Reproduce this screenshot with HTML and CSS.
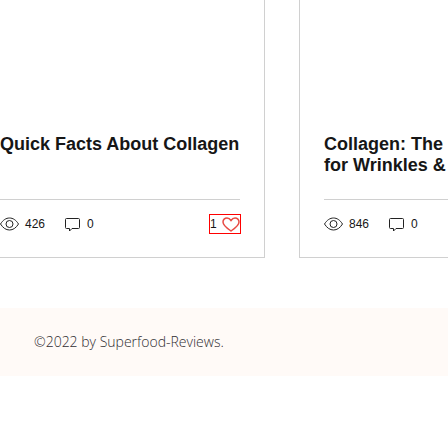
FILE: index.html
```html
<!DOCTYPE html>
<html lang="en">
<head>
<meta charset="utf-8">
<title>Superfood-Reviews</title>
<link rel="stylesheet" href="styles.css">
</head>
<body>
<svg class="defs" aria-hidden="true">
  <symbol id="eye" viewBox="0 0 19 14">
    <path d="M.5 7C3 3 6 1 9.500 1S16 3 18.500 7C16 11 13 13 9.500 13S3 11 .5 7Z"/>
    <circle cx="9.500" cy="7" r="3.500"/>
  </symbol>
  <symbol id="comment" viewBox="0 0 16 15">
    <path d="M1.500 1.500h12q1 0 1 1v8q0 1-1 1H7L4.500 14v-2.500h-3q-1 0-1-1v-8q0-1 1-1Z"/>
  </symbol>
  <symbol id="heart" viewBox="0 0 18 15">
    <path d="M9 3.500C7.800 1.700 6.600 1 5 1 2.700 1 1 2.700 1 5c0 3.500 4 6.300 8 9 4-2.700 8-5.500 8-9 0-2.300-1.700-4-4-4-1.600 0-2.800.7-4 2.500Z"/>
  </symbol>
</svg>
<main class="posts">
  <article class="card">
    <h2 class="title">Quick Facts About Collagen</h2>
    <div class="stats">
      <span class="stat"><svg class="icon eye" role="img" aria-label="Views"><use href="#eye"/></svg>426</span>
      <span class="stat"><svg class="icon comment" role="img" aria-label="Comments"><use href="#comment"/></svg>0</span>
      <button class="like" type="button">1<svg class="icon heart" role="img" aria-label="Like"><use href="#heart"/></svg></button>
    </div>
  </article>
  <article class="card">
    <h2 class="title">Collagen: The Benefits<br>for Wrinkles &amp; Skin</h2>
    <div class="stats">
      <span class="stat"><svg class="icon eye" role="img" aria-label="Views"><use href="#eye"/></svg>846</span>
      <span class="stat"><svg class="icon comment" role="img" aria-label="Comments"><use href="#comment"/></svg>0</span>
    </div>
  </article>
</main>
<footer class="footer">©2022 by Superfood-Reviews.</footer>
</body>
</html>
```
FILE: styles.css
```css
* { box-sizing: border-box; }
body {
  margin: 0;
  background: #fff;
  color: #161616;
  font-family: "Liberation Sans", Arial, sans-serif;
  overflow: hidden;
}
.defs { display: none; }
.posts {
  display: flex;
  gap: 34px;
  margin-left: -25px;
}
.card {
  flex: 0 0 290px;
  padding: 134px 24px 23px;
  border: 1px solid #d0d0d0;
  border-top: 0;
}
.title {
  min-height: 42px;
  margin: 0 0 23px;
  font-size: 18px;
  line-height: 21px;
  font-weight: 700;
  white-space: nowrap;
}
.stats {
  display: flex;
  align-items: center;
  gap: 20px;
  padding-top: 14px;
  border-top: 1px solid #d0d0d0;
  font-size: 12px;
  line-height: 20px;
}
.stat {
  display: flex;
  align-items: center;
  gap: 6px;
}
.icon {
  flex: none;
  fill: none;
  stroke: #222;
  stroke-width: 1px;
}
.eye { width: 19px; height: 14px; }
.comment { width: 16px; height: 15px; }
.heart {
  width: 18px;
  height: 15px;
  stroke: #e84a43;
  stroke-width: 1.5px;
}
.like {
  display: flex;
  align-items: center;
  justify-content: space-between;
  width: 32px;
  height: 20px;
  margin: 0 -1px 0 auto;
  padding: 0;
  border: 1px solid #f00;
  background: none;
  color: inherit;
  font: inherit;
}
.footer {
  margin-top: 50px;
  padding: 24px 34px;
  background: #fffaf7;
  color: #302d32;
  font: 300 14px/20px "Open Sans", sans-serif;
}
```
